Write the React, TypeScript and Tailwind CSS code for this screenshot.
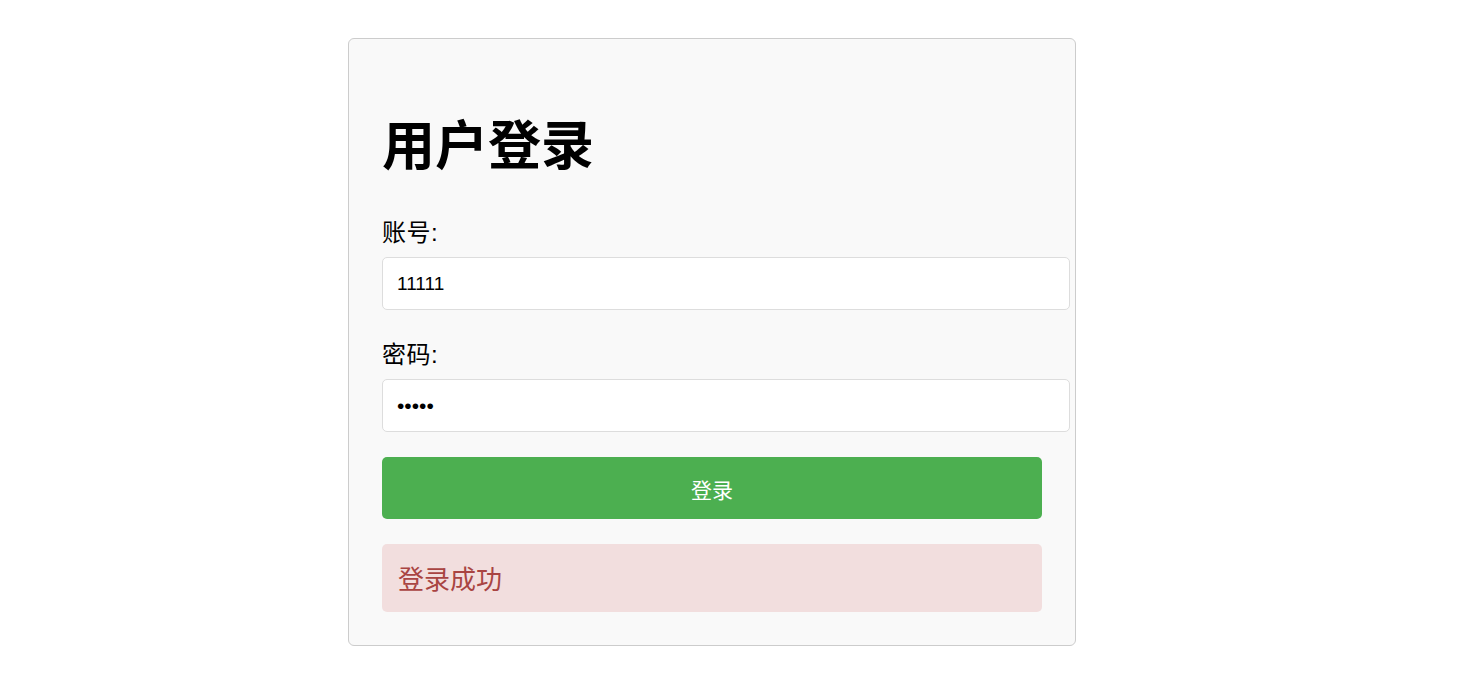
import React from "react";

export default function App() {
  const font = { fontFamily: '"Liberation Sans", "Noto Sans CJK SC", sans-serif' };
  return (
    <div className="min-h-[700px] w-full bg-white pt-[38px]" style={font}>
      <div className="ml-[348px] w-[728px] rounded-[6px] border border-[#cccccc] bg-[#f9f9f9] p-[33px]">
        <h1 className="mt-[48px] mb-[41px] text-[53px] font-bold leading-[54px] text-black">用户登录</h1>
        <div className="flex flex-col">
          <label className="pt-[2px] text-[24px] leading-[32px] tracking-[0.5px] text-black">账号:</label>
          <input
            type="text"
            readOnly
            defaultValue="11111"
            className="mt-[8px] h-[53px] w-[688px] rounded-[5px] border border-[#dddddd] bg-white pl-[14px] text-[19px] text-black outline-none"
          />
          <label className="mt-[27px] pt-[2px] text-[24px] leading-[32px] tracking-[0.5px] text-black">密码:</label>
          <input
            type="password"
            readOnly
            defaultValue="11111"
            className="mt-[8px] h-[53px] w-[688px] rounded-[5px] border border-[#dddddd] bg-white pl-[14px] text-[21px] text-black outline-none"
          />
          <button className="mt-[25px] h-[62px] w-[660px] rounded-[5px] bg-[#4caf50] pt-[5px] text-[21px] text-white">登录</button>
          <div className="mt-[25px] h-[68px] w-[660px] rounded-[5px] bg-[#f2dede] px-[16px] pt-[18px] pb-[14px] text-[26px] leading-[36px] text-[#a94442]">
            登录成功
          </div>
        </div>
      </div>
    </div>
  );
}
